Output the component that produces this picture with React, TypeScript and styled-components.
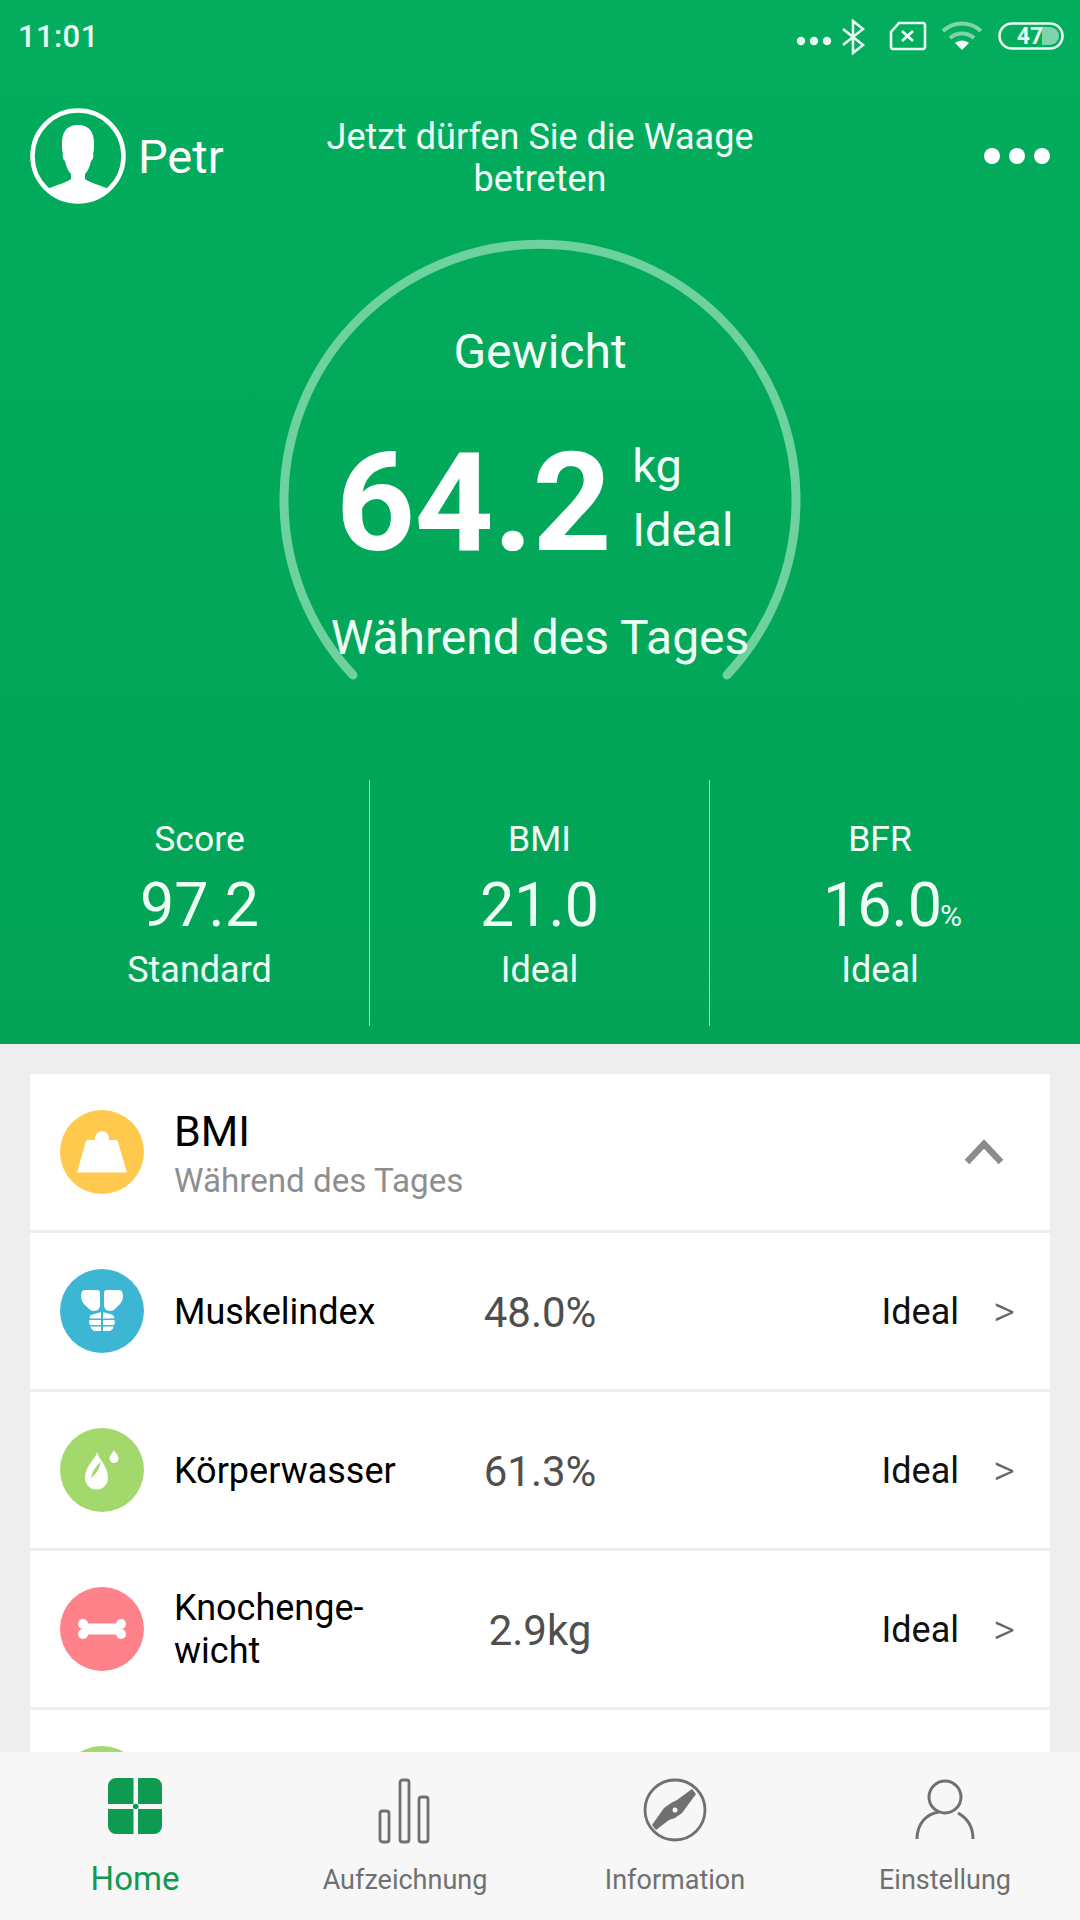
import React from "react";
import styled, { createGlobalStyle } from "styled-components";

const Global = createGlobalStyle`
  html, body { margin: 0; padding: 0; background: #eeeeee; }
  * { box-sizing: border-box; }
  #root { width: 1080px; height: 1920px; }
`;

const Page = styled.div`
  width: 1080px; height: 1920px; display: flex; flex-direction: column; overflow: hidden;
  font-family: Roboto, "Liberation Sans", sans-serif; background: #eeeeee;
`;
const Hero = styled.section`
  height: 1044px; flex: none; display: flex; flex-direction: column; color: #fff;
  background: linear-gradient(180deg, #02ad5d 0%, #02a357 100%);
`;
const StatusBar = styled.div`
  height: 72px; flex: none; padding: 0 16px 0 18px; display: flex; align-items: center; justify-content: space-between;
`;
const Time = styled.div`font-size: 31px; font-weight: 500; color: #eafbf2; letter-spacing: 0.4px;`;
const StatusIcons = styled.div`display: flex; align-items: center;`;
const Header = styled.div`
  height: 168px; flex: none; padding: 0 30px 0 30px; display: grid; grid-template-columns: 270px 1fr 270px; align-items: center;
`;
const Profile = styled.div`display: flex; align-items: center; gap: 12px;`;
const Name = styled.div`font-size: 47px; line-height: 56px; margin-top: 2px;`;
const Prompt = styled.div`font-size: 36px; line-height: 42px; text-align: center; color: #f2fff8; margin-top: 3px;`;
const Dots = styled.div`justify-self: end; display: flex; gap: 9px; margin-top: -1px;`;
const Dot = styled.span`width: 16px; height: 16px; border-radius: 50%; background: #fff;`;

const Gauge = styled.div`
  position: relative; height: 540px; flex: none; display: flex; flex-direction: column; align-items: center; color: #fff;
`;
const Arc = styled.svg`position: absolute; left: 270px; top: 0; width: 540px; height: 460px; overflow: visible;`;
const GaugeTitle = styled.div`position: relative; font-size: 48px; line-height: 54px; margin-top: 85px; color: #f2fff8;`;
const Reading = styled.div`position: relative; display: flex; align-items: flex-start; margin-top: 50px; margin-left: -8px; height: 148px; width: 400px;`;
const Big = styled.div`font-size: 138px; font-weight: 700; line-height: 148px; letter-spacing: -0.6px;`;
const Side = styled.div`display: flex; flex-direction: column; margin-left: 21px; font-size: 47px; line-height: 64px; margin-top: 5px; color: #f2fff8;`;
const Period = styled.div`position: relative; font-size: 48px; line-height: 56px; margin-top: 33px; color: #eefff6;`;

const Stats = styled.div`display: grid; grid-template-columns: 339px 340px 341px; margin: 0 30px; height: 246px; flex: none;`;
const Stat = styled.div<{ $line?: boolean }>`
  display: flex; flex-direction: column; align-items: center; color: #effff6;
  padding-top: 37px; border-left: ${(p) => (p.$line ? "1px solid #9fdcbd" : "none")};
`;
const StatLabel = styled.div`font-size: 35.5px; line-height: 44px;`;
const StatValue = styled.div`font-size: 61px; line-height: 72px; margin-top: 8px;`;
const Percent = styled.span`font-size: 30px; line-height: 1; margin-right: -25px; margin-left: -2px;`;
const StatNote = styled.div`font-size: 36px; line-height: 44px; margin-top: 7px;`;

const Scroll = styled.div`flex: 1; min-height: 0; overflow: hidden; padding: 30px 30px 0;`;
const Card = styled.div`background: #fff; display: flex; flex-direction: column;`;
const Head = styled.div`
  height: 159px; flex: none; display: flex; align-items: center; padding: 0 28px 0 30px; border-bottom: 3px solid #eeeeee;
`;
const Badge = styled.div<{ $color: string }>`
  width: 84px; height: 84px; flex: none; border-radius: 50%; background: ${(p) => p.$color};
  display: flex; align-items: center; justify-content: center;
`;
const HeadText = styled.div`margin-left: 30px; margin-top: 3px; flex: 1; display: flex; flex-direction: column;`;
const HeadTitle = styled.div`font-size: 43px; line-height: 50px; color: #000;`;
const HeadSub = styled.div`font-size: 33.2px; line-height: 40px; color: #8e8e8e; margin-top: 5px;`;
const Row = styled.div`
  height: 159px; flex: none; display: grid; grid-template-columns: 84px 310px 172px 1fr 91px; align-items: center;
  padding-left: 30px; border-bottom: 3px solid #eeeeee;
`;
const RowLabel = styled.div`font-size: 36px; line-height: 43px; color: #000; margin-left: 30px; margin-top: 2px; grid-column: 2;`;
const RowValue = styled.div`font-size: 42px; color: #4f4f4f; text-align: center; white-space: nowrap; justify-self: center; margin-top: 2px;`;
const RowState = styled.div`font-size: 36px; color: #111; text-align: right; margin-top: 2px;`;
const Caret = styled.div`font-size: 42px; color: #666; text-align: right; padding-right: 35px; font-weight: 300;`;

const Nav = styled.nav`
  height: 168px; flex: none; background: #f7f7f7; display: grid; grid-template-columns: repeat(4, 270px);
`;
const Tab = styled.div<{ $active?: boolean }>`
  display: flex; flex-direction: column; align-items: center; padding-top: 26px;
  color: ${(p) => (p.$active ? "#0f9a52" : "#707070")};
`;
const TabIcon = styled.div`height: 66px; display: flex; align-items: flex-start; justify-content: center;`;
const TabLabel = styled.div<{ $active?: boolean }>`
  font-size: ${(p) => (p.$active ? "33px" : "27px")}; line-height: 36px; margin-top: ${(p) => (p.$active ? "17px" : "18px")};
`;

const rows = [
  { label: "Muskelindex", value: "48.0%", color: "#3db6d3", icon: "muscle" },
  { label: "Körperwasser", value: "61.3%", color: "#a3d86d", icon: "water" },
  { label: "Knochenge-\nwicht", value: "2.9kg", color: "#ff828a", icon: "bone" },
  { label: "", value: "", color: "#a3d86d", icon: "" },
];

const Weight = () => (
  <svg width="50" height="42" viewBox="0 0 50 42" style={{ marginTop: -1 }}>
    <path fill="#fff" d="M25 0a7.500 7.500 0 0 1 7 9h6.500c1.200 0 2 .6 2.300 1.800L50 41.500H0L8.700 10.800C9 9.600 9.800 9 11 9h7a7.500 7.500 0 0 1 7-9z" />
  </svg>
);
const Muscle = () => (
  <svg width="42" height="42" viewBox="0 0 42 42">
    <g fill="#fff">
      <path d="M4 0h12c2 0 3 1 3 3v12c0 3-2 6-6 6-3 0-4-1-6-3C4 15 0 12 0 6c0-3 1-6 4-6z" />
      <path d="M38 0H26c-2 0-3 1-3 3v12c0 3 2 6 6 6 3 0 4-1 6-3 3-3 7-6 7-12 0-3-1-6-4-6z" />
      <path d="M10 25l10-3v6.500H9c-.5-1.500 0-2.500 1-3.500zM32 25l-10-3v6.500h11c.5-1.500 0-2.500-1-3.500z" />
      <path d="M8.500 30H20v5H9c-1-1-1-3.500-.5-5zM33.500 30H22v5h11c1-1 1-3.500.5-5z" />
      <path d="M9.500 36.500H20V41h-7c-2-1-3.500-3-3.500-4.500zM32.500 36.500H22V41h7c2-1 3.500-3 3.500-4.500z" />
    </g>
  </svg>
);
const Water = () => (
  <svg width="34" height="40" viewBox="0 0 34 40">
    <path fill="#fff" d="M12 2c2 8 11 14 11 26a11.500 11.500 0 0 1-23 0C0 16 10 10 12 2z" />
    <path fill="#fff" d="M29 0c1 3 4.500 5 4.500 8.500a4.500 4.500 0 0 1-9 0C24.500 5 28 3 29 0z" />
    <path fill="#a3d86d" d="M15.500 12C15 18 11 24 6 28c1-6 5-12 9.500-16z" />
  </svg>
);
const Bone = () => (
  <svg width="48" height="20" viewBox="0 0 48 20">
    <g fill="#fff">
      <rect x="6" y="4.500" width="36" height="11" />
      <circle cx="5" cy="5" r="5" /><circle cx="5" cy="15" r="5" />
      <circle cx="43" cy="5" r="5" /><circle cx="43" cy="15" r="5" />
    </g>
  </svg>
);
const rowIcon = (k: string) => (k === "muscle" ? <Muscle /> : k === "water" ? <Water /> : k === "bone" ? <Bone /> : null);

export default function App() {
  return (
    <Page>
      <Global />
      <Hero>
        <StatusBar>
          <Time>11:01</Time>
          <StatusIcons>
            <svg width="36" height="12" viewBox="0 0 36 12" style={{ marginTop: 10 }}>
              <g fill="#eafbf2"><circle cx="5" cy="6" r="4.200" /><circle cx="18" cy="6" r="4.200" /><circle cx="31" cy="6" r="4.200" /></g>
            </svg>
            <svg width="24" height="36" viewBox="0 0 24 36" style={{ marginLeft: 9, marginTop: 2 }}>
              <path fill="none" stroke="#eafbf2" strokeWidth="2.600" d="M2 10l20 16-10 8V2l10 8L2 26" />
            </svg>
            <svg width="38" height="30" viewBox="0 0 38 30" style={{ marginLeft: 24 }}>
              <path fill="none" stroke="#eafbf2" strokeWidth="2.600" d="M10 2h24c1 0 2 1 2 2v22c0 1-1 2-2 2H4c-1 0-2-1-2-2V11z" />
              <path fill="none" stroke="#eafbf2" strokeWidth="2.800" d="M13 10l11 10M24 10L13 20" />
            </svg>
            <svg width="42" height="32" viewBox="0 0 42 32" style={{ marginLeft: 14 }}>
              <path fill="none" stroke="#7fd5ab" strokeWidth="4" d="M2 11c11-10 27-10 38 0" />
              <path fill="none" stroke="#7fd5ab" strokeWidth="4" d="M9 18c7-6 17-6 24 0" />
              <path fill="#f2fff8" d="M14 23c4-3.500 10-3.500 14 0l-7 7z" />
            </svg>
            <svg width="66" height="28" viewBox="0 0 66 28" style={{ marginLeft: 15 }}>
              <rect x="1.500" y="1.500" width="63" height="25" rx="12.500" fill="none" stroke="#eafbf2" strokeWidth="2.600" />
              <path fill="#7fd5ab" d="M44 5h8a9 9 0 0 1 0 18h-8z" />
              <text x="32" y="22" textAnchor="middle" fontSize="23" fontWeight="700" fontFamily="Roboto" fill="#eafbf2">47</text>
            </svg>
          </StatusIcons>
        </StatusBar>
        <Header>
          <Profile>
            <svg width="96" height="96" viewBox="0 0 96 96" style={{ marginTop: 0 }}>
              <defs><clipPath id="c"><circle cx="48" cy="48" r="46" /></clipPath></defs>
              <circle cx="48" cy="48" r="45.500" fill="none" stroke="#fff" strokeWidth="4.500" />
              <path clipPath="url(#c)" fill="#fff" d="M48 17c-12 0-16 8-16 18 0 5 0 8 1 11-1 1 0 6 2 7 1 5 3 10 6 13v5c-5 4-18 7-26 11-2 2-1 14 33 14s35-12 33-14c-8-4-21-7-26-11v-5c3-3 5-8 6-13 2-1 3-6 2-7 1-3 1-6 1-11 0-10-4-18-16-18z" />
            </svg>
            <Name>Petr</Name>
          </Profile>
          <Prompt>Jetzt dürfen Sie die Waage<br />betreten</Prompt>
          <Dots><Dot /><Dot /><Dot /></Dots>
        </Header>
        <Gauge>
          <Arc viewBox="0 0 540 460">
            <path fill="none" stroke="#6ed1a0" strokeWidth="9" strokeLinecap="round"
              d="M83 435A256 256 0 1 1 457 435" />
          </Arc>
          <GaugeTitle>Gewicht</GaugeTitle>
          <Reading>
            <Big>64.2</Big>
            <Side><span>kg</span><span>Ideal</span></Side>
          </Reading>
          <Period>Während des Tages</Period>
        </Gauge>
        <Stats>
          <Stat><StatLabel>Score</StatLabel><StatValue>97.2</StatValue><StatNote>Standard</StatNote></Stat>
          <Stat $line><StatLabel>BMI</StatLabel><StatValue>21.0</StatValue><StatNote>Ideal</StatNote></Stat>
          <Stat $line><StatLabel>BFR</StatLabel><StatValue>16.0<Percent>%</Percent></StatValue><StatNote>Ideal</StatNote></Stat>
        </Stats>
      </Hero>
      <Scroll>
        <Card>
          <Head>
            <Badge $color="#ffc94d"><Weight /></Badge>
            <HeadText>
              <HeadTitle>BMI</HeadTitle>
              <HeadSub>Während des Tages</HeadSub>
            </HeadText>
            <svg width="40" height="26" viewBox="0 0 40 26" style={{ marginRight: 18 }}>
              <path fill="none" stroke="#8c8c8c" strokeWidth="6.500" d="M3 23L20 5l17 18" />
            </svg>
          </Head>
          {rows.map((r, i) => (
            <Row key={i}>
              <Badge $color={r.color}>{rowIcon(r.icon)}</Badge>
              <RowLabel>{r.label.split("\n").map((t) => <div key={t}>{t}</div>)}</RowLabel>
              <RowValue>{r.value}</RowValue>
              <RowState>{r.value ? "Ideal" : ""}</RowState>
              <Caret>{r.value ? ">" : ""}</Caret>
            </Row>
          ))}
        </Card>
      </Scroll>
      <Nav>
        <Tab $active>
          <TabIcon>
            <svg width="54" height="56" viewBox="0 0 54 56">
              <path fill="#0f9a52" d="M8 0h17.500v26H0V8a8 8 0 0 1 8-8zM30 0h16a8 8 0 0 1 8 8v18H30zM0 31h25.500v25H8a8 8 0 0 1-8-8zM30 31h24v17a8 8 0 0 1-8 8H30z" />
              <circle cx="27.700" cy="28.500" r="2.800" fill="#0f9a52" />
            </svg>
          </TabIcon>
          <TabLabel $active>Home</TabLabel>
        </Tab>
        <Tab>
          <TabIcon>
            <svg width="54" height="66" viewBox="0 0 54 66">
              <g fill="none" stroke="#707070" strokeWidth="2.800">
                <rect x="2" y="33" width="9" height="31" rx="2.500" />
                <rect x="22" y="2" width="9" height="62" rx="2.500" />
                <rect x="41" y="19" width="9" height="45" rx="2.500" />
              </g>
            </svg>
          </TabIcon>
          <TabLabel>Aufzeichnung</TabLabel>
        </Tab>
        <Tab>
          <TabIcon>
            <svg width="64" height="64" viewBox="0 0 64 64">
              <circle cx="32" cy="32" r="30" fill="none" stroke="#707070" strokeWidth="2.800" />
              <path fill="#707070" d="M49 11l4 5-14 19-7 5-6 2-13 10-4-5 12-17 7-5 6-3z" />
              <circle cx="32" cy="32" r="2.500" fill="#f7f7f7" />
            </svg>
          </TabIcon>
          <TabLabel>Information</TabLabel>
        </Tab>
        <Tab>
          <TabIcon>
            <svg width="60" height="62" viewBox="0 0 60 62">
              <g fill="none" stroke="#707070" strokeWidth="3">
                <circle cx="30" cy="19" r="16" />
                <path d="M2 61c0-15 9-25 22-27" />
                <path d="M58 61c0-12-6-21-15-26" />
              </g>
            </svg>
          </TabIcon>
          <TabLabel>Einstellung</TabLabel>
        </Tab>
      </Nav>
    </Page>
  );
}
